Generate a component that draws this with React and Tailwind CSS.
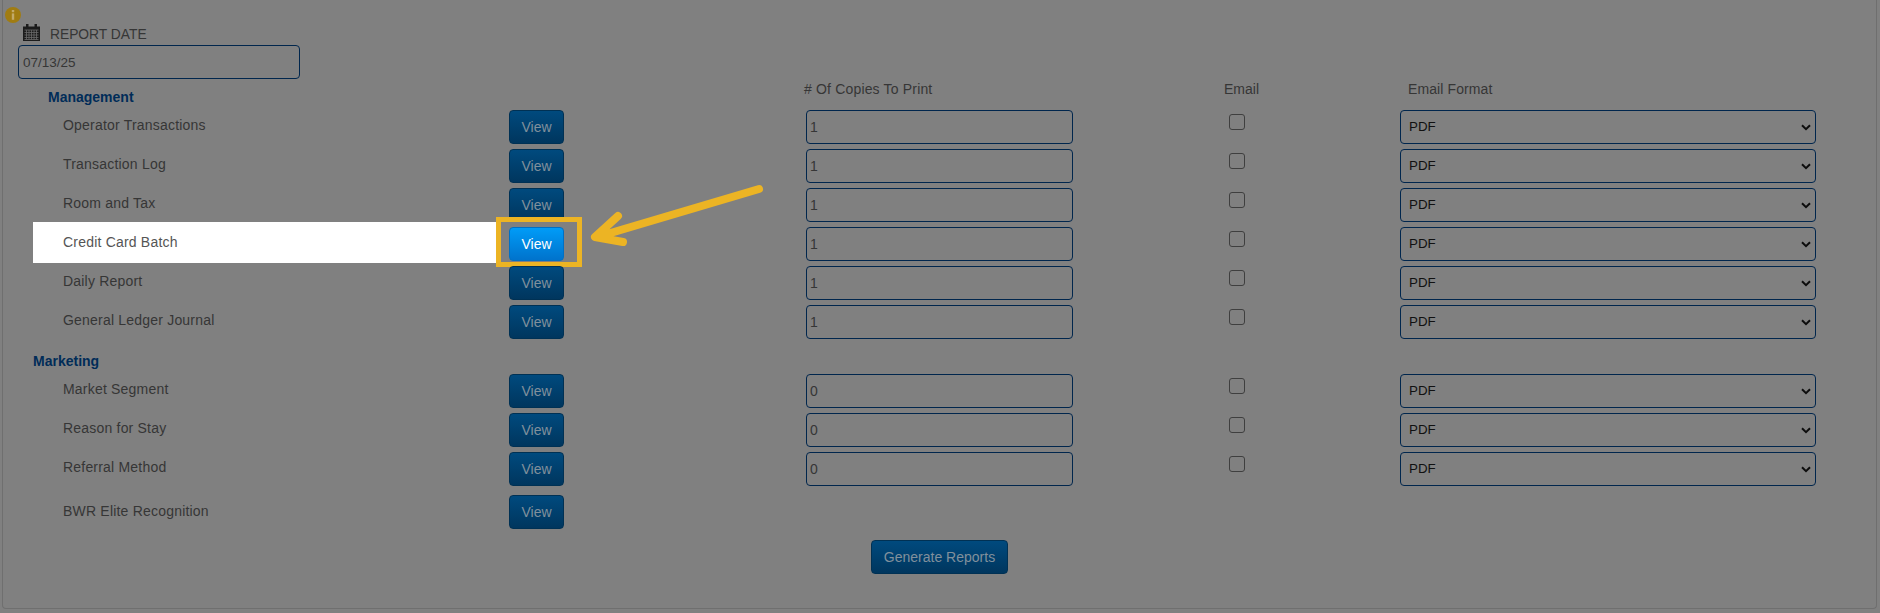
import React from "react";

// Report rows; sections share the same column grid
const managementReports = [
	{ name: "Operator Transactions", copies: "1" },
	{ name: "Transaction Log", copies: "1" },
	{ name: "Room and Tax", copies: "1" },
	{ name: "Credit Card Batch", copies: "1", highlight: true },
	{ name: "Daily Report", copies: "1" },
	{ name: "General Ledger Journal", copies: "1" },
];

const marketingReports = [
	{ name: "Market Segment", copies: "0" },
	{ name: "Reason for Stay", copies: "0" },
	{ name: "Referral Method", copies: "0" },
];

const gridCols = "grid grid-cols-[506px_297px_423px_171px_416px]";

const ViewButton = ({ active }) => (
	<button
		className={
			active
				? "relative w-[55px] h-[34px] rounded-[4px] border border-[#0070c4] bg-gradient-to-b from-[#009cf8] to-[#0073cc] text-white text-[14px]"
				: "relative w-[55px] h-[34px] rounded-[4px] border border-[#003154] bg-gradient-to-b from-[#004a7e] to-[#00365e] text-[#80909c] text-[14px]"
		}
	>
		View
	</button>
);

const ReportRow = ({ report }) => (
	<div className={`${gridCols} h-[39px] relative`}>
		{report.highlight && (
			<div className="absolute left-[30px] top-[-5px] w-[464px] h-[41px] bg-white"></div>
		)}
		<div
			className={
				report.highlight
					? "relative pl-[60px] pt-[5px] text-[14px] tracking-[0.2px] leading-5 text-[#555555]"
					: "relative pl-[60px] pt-[5px] text-[14px] tracking-[0.2px] leading-5 text-[#363636]"
			}
		>
			{report.name}
		</div>
		<div className="relative">
			{report.highlight && (
				<div className="absolute left-[-13px] top-[-10px] w-[86px] h-[50px] border-[5px] border-[#ecb424]"></div>
			)}
			<ViewButton active={report.highlight} />
		</div>
		<div>
			<input
				readOnly
				value={report.copies}
				className="w-[267px] h-[34px] rounded-[4px] border border-[#00264d] bg-transparent px-[3px] text-[14px] text-[#363636] outline-none"
			/>
		</div>
		<div className="pt-[4px]">
			<div className="w-[16px] h-[16px] rounded-[3px] border border-[#3f3f3f]"></div>
		</div>
		<div className="relative">
			<select className="appearance-none w-[416px] h-[34px] rounded-[4px] border border-[#00264d] bg-transparent pl-[8px] text-[13.33px] text-[#111111] outline-none">
				<option>PDF</option>
			</select>
			<svg className="absolute right-[5px] top-[14px]" width="10" height="7" viewBox="0 0 10 7" fill="none">
				<path d="M1 1.2 5 5.2 9 1.2" stroke="#0d0d0d" strokeWidth="2" />
			</svg>
		</div>
	</div>
);

export default function App() {
	return (
		<div className="relative h-[613px] overflow-hidden bg-[#808080] font-['Liberation_Sans',Arial,sans-serif]">
			<div className="mx-[2px] w-[1875px] h-[609px] border-x border-b border-[#6f6f6f] rounded-b-[4px]">
				{/* Date filter */}
				<div className="pl-[15px] pt-[24px]">
					<div className="flex items-center h-[21px] pl-[5px]">
						<svg width="17" height="17" viewBox="0 0 17 17" className="mt-[-5px]">
							<path fill="#1c1c1c" d="M0 2.5h3V0h2.5v2.5h6V0H14v2.5h3V17H0z" />
							<path
								stroke="#6a6a6a"
								strokeWidth="0.8"
								fill="none"
								d="M1.5 6h14M1.5 8.5h14M1.5 11h14M1.5 13.5h14M1.5 15.5h14M3.5 6v9.5M6 6v9.5M8.5 6v9.5M11 6v9.5M13.5 6v9.5"
							/>
						</svg>
						<span className="ml-[10px] mt-[2px] text-[13.8px] text-[#363636]">REPORT DATE</span>
					</div>
					<input
						readOnly
						value="07/13/25"
						className="block w-[282px] h-[34px] rounded-[4px] border border-[#00264d] bg-transparent px-[4px] text-[13.5px] text-[#363636] outline-none"
					/>
				</div>

				{/* Column headings */}
				<div className={`${gridCols} h-[31px] text-[14px] leading-5`}>
					<div className="pl-[45px] pt-[8px] font-bold text-[#002c58]">Management</div>
					<div></div>
					<div className="ml-[-2px] tracking-[0.17px] text-[#363636]">
						# Of Copies To Print
					</div>
					<div className="ml-[-5px] text-[#363636]">Email</div>
					<div className="ml-[8px] tracking-[0.1px] text-[#363636]">Email Format</div>
				</div>

				{managementReports.map((report) => (
					<ReportRow key={report.name} report={report} />
				))}

				<div className="h-[30px] pl-[30px] pt-[7px] text-[14px] leading-5 font-bold text-[#002c58]">Marketing</div>

				{marketingReports.map((report) => (
					<ReportRow key={report.name} report={report} />
				))}

				<div className={`${gridCols} mt-[4px] h-[34px]`}>
					<div className="pl-[60px] pt-[6px] text-[14px] tracking-[0.2px] leading-5 text-[#363636]">BWR Elite Recognition</div>
					<div>
						<ViewButton />
					</div>
				</div>

				<div className="mt-[11px] pl-[868px]">
					<button className="w-[137px] h-[34px] rounded-[4px] border border-[#003154] bg-gradient-to-b from-[#004a7e] to-[#00365e] text-[14px] text-[#80909c]">
						Generate Reports
					</button>
				</div>
			</div>

			{/* Info marker */}
			<svg className="absolute left-[5px] top-[7px]" width="16" height="16" viewBox="0 0 16 16">
				<circle cx="8" cy="8" r="8" fill="#a07c12" />
				<rect x="6.8" y="3" width="2.4" height="2.2" fill="#c2aa6a" />
				<rect x="6.8" y="6.4" width="2.4" height="6.4" fill="#c2aa6a" />
			</svg>

			{/* Annotation arrow */}
			<svg className="absolute left-[585px] top-[180px]" width="185" height="75" viewBox="0 0 185 75" fill="none">
				<path
					d="M174 9 12 57M33 36 10 57 38 62"
					stroke="#ecb424"
					strokeWidth="8"
					strokeLinecap="round"
					strokeLinejoin="round"
				/>
			</svg>
		</div>
	);
}
